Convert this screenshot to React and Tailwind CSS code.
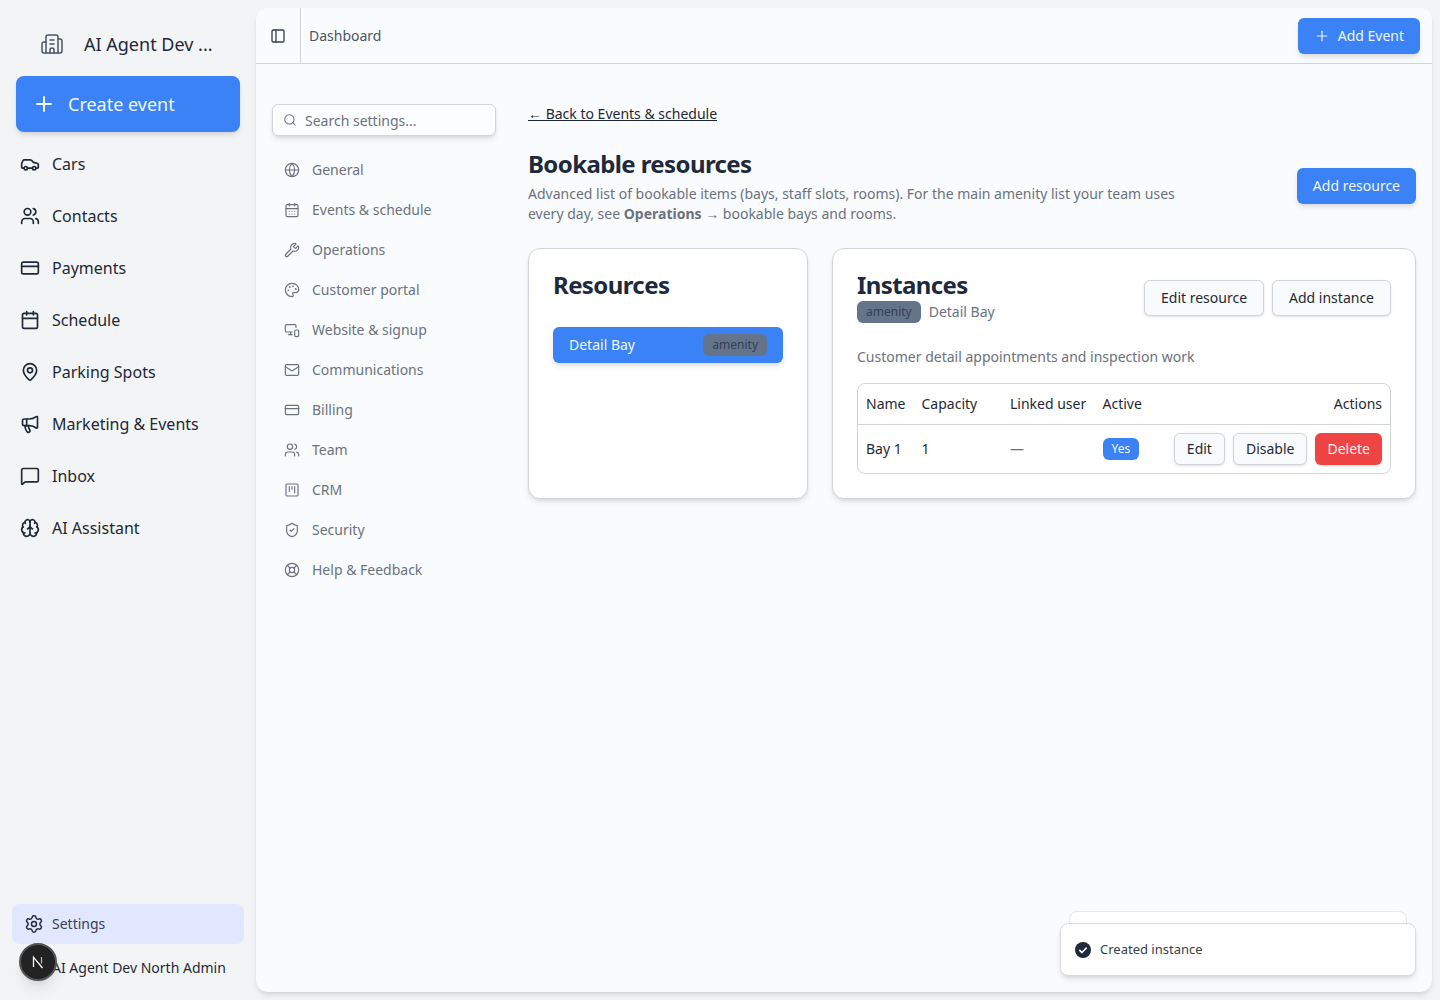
import React from "react";
import {
  Building2, Plus, Car, Users, CreditCard, Calendar, MapPin, Megaphone, MessageSquare, Brain,
  Settings, PanelLeft, Search, Globe, CalendarDays, Wrench, Palette, MonitorSmartphone, Mail,
  SquareKanban, ShieldCheck, LifeBuoy,
} from "lucide-react";

const mainNav = [
  [Car, "Cars"],
  [Users, "Contacts"],
  [CreditCard, "Payments"],
  [Calendar, "Schedule"],
  [MapPin, "Parking Spots"],
  [Megaphone, "Marketing & Events"],
  [MessageSquare, "Inbox"],
  [Brain, "AI Assistant"],
];

const settingsNav = [
  [Globe, "General"],
  [CalendarDays, "Events & schedule"],
  [Wrench, "Operations"],
  [Palette, "Customer portal"],
  [MonitorSmartphone, "Website & signup"],
  [Mail, "Communications"],
  [CreditCard, "Billing"],
  [Users, "Team"],
  [SquareKanban, "CRM"],
  [ShieldCheck, "Security"],
  [LifeBuoy, "Help & Feedback"],
];

function Sidebar() {
  return (
    <aside className="flex h-[1000px] w-[256px] shrink-0 flex-col">
      <div className="flex h-[76px] items-center pl-[40px] pt-[12px]">
        <Building2 className="h-[24px] w-[24px] text-[#4b5563]" strokeWidth={1.5} />
        <span className="ml-[20px] text-[18px] leading-[28px] text-[#1f2937]">AI Agent Dev ...</span>
      </div>
      <div className="px-[16px]">
        <button className="flex h-[56px] w-full items-center rounded-lg bg-[#3b82f6] pl-[16px] text-[18px] leading-[28px] text-[#eff6ff] shadow-md">
          <Plus className="h-[24px] w-[24px]" />
          <span className="ml-[12px]">Create event</span>
        </button>
      </div>
      <nav className="mt-[6px] flex flex-col">
        {mainNav.map(([Icon, label]) => (
          <div key={label} className="flex h-[52px] items-center pl-[20px] text-[16px] leading-[24px] text-[#1f2937]">
            <Icon className="h-[20px] w-[20px] text-[#1f2937]" strokeWidth={2} />
            <span className="ml-[12px]">{label}</span>
          </div>
        ))}
      </nav>
      <div className="mt-auto px-[12px] pb-[8px]">
        <div className="flex h-[40px] items-center rounded-lg bg-[#e0e7ff] pl-[12px] text-[14px] leading-[20px] text-[#374151]">
          <Settings className="h-[20px] w-[20px] text-[#1f2937]" strokeWidth={1.75} />
          <span className="ml-[8px]">Settings</span>
        </div>
        <div className="flex h-[48px] items-center pl-[40px] text-[14px] leading-[20px] text-[#1f2937]">AI Agent Dev North Admin</div>
      </div>
    </aside>
  );
}

function OutlineButton({ children, small }) {
  return (
    <button className={`rounded-md border border-[#d1d5db] bg-[#f9fafb] text-[14px] leading-[20px] text-[#1f2937] shadow-sm ${small ? "h-[32px] px-[12px]" : "h-[36px] px-[16px]"}`}>
      {children}
    </button>
  );
}

function Badge({ children }) {
  return (
    <span className="inline-flex h-[22px] items-center rounded-md bg-[#64748b] px-[9px] text-[12px] leading-[16px] text-[#334155]">{children}</span>
  );
}

function Content() {
  return (
    <div className="min-w-0 flex-1">
      <a className="block text-[14px] leading-[20px] text-[#1f2937] underline">← Back to Events &amp; schedule</a>
      <div className="mt-[24px] flex items-center justify-between">
        <div>
          <h1 className="text-[24px] font-bold leading-[32px] tracking-tight text-[#1e293b]">Bookable resources</h1>
          <p className="mt-[4px] w-[660px] text-[14px] leading-[20px] text-[#6b7280]">
            Advanced list of bookable items (bays, staff slots, rooms). For the main amenity list your team uses every day, see <strong className="font-bold">Operations</strong> → bookable bays and rooms.
          </p>
        </div>
        <button className="h-[36px] rounded-md bg-[#3b82f6] px-[16px] text-[14px] leading-[20px] text-[#eff6ff] shadow-md">Add resource</button>
      </div>
      <div className="mt-[24px] flex gap-[24px]">
        <section className="h-[251px] w-[280px] rounded-xl border border-[#d1d5db] bg-white px-[24px] pb-[24px] pt-[22px] shadow-md">
          <h2 className="text-[24px] font-bold leading-[28px] tracking-tight text-[#1e293b]">Resources</h2>
          <div className="mt-[28px] flex h-[36px] items-center justify-between rounded-md bg-[#3b82f6] pl-[16px] pr-[16px] text-[14px] leading-[20px] text-[#eff6ff] shadow-md">
            <span>Detail Bay</span>
            <Badge>amenity</Badge>
          </div>
        </section>
        <section className="h-[251px] flex-1 rounded-xl border border-[#d1d5db] bg-white px-[24px] pb-[24px] pt-[22px] shadow-md">
          <div className="flex items-start justify-between">
            <div>
              <h2 className="text-[24px] font-bold leading-[28px] tracking-tight text-[#1e293b]">Instances</h2>
              <div className="mt-[2px] flex items-center gap-[8px] text-[14px] leading-[20px] text-[#6b7280]">
                <Badge>amenity</Badge>
                <span>Detail Bay</span>
              </div>
            </div>
            <div className="mt-[9px] flex gap-[8px]">
              <OutlineButton>Edit resource</OutlineButton>
              <OutlineButton>Add instance</OutlineButton>
            </div>
          </div>
          <p className="mt-[24px] text-[14px] leading-[20px] text-[#6b7280]">Customer detail appointments and inspection work</p>
          <div className="mt-[16px] overflow-hidden rounded-lg border border-[#d1d5db]">
            <table className="w-full table-fixed text-[14px] leading-[20px] text-[#1f2937]">
              <colgroup>
                <col className="w-[55.5px]" />
                <col className="w-[88.5px]" />
                <col className="w-[92.5px]" />
                <col className="w-[72px]" />
                <col />
              </colgroup>
              <thead>
                <tr className="h-[40px] border-b border-[#d1d5db]">
                  <th className="px-[8px] text-left font-normal">Name</th>
                  <th className="px-[8px] text-left font-normal">Capacity</th>
                  <th className="px-[8px] text-left font-normal">Linked user</th>
                  <th className="px-[8px] text-left font-normal">Active</th>
                  <th className="px-[8px] text-right font-normal">Actions</th>
                </tr>
              </thead>
              <tbody>
                <tr className="h-[49px]">
                  <td className="px-[8px]">Bay 1</td>
                  <td className="px-[8px]">1</td>
                  <td className="px-[8px] text-[#6b7280]">—</td>
                  <td className="px-[8px]">
                    <span className="inline-flex h-[22px] items-center rounded-md bg-[#3b82f6] px-[9px] text-[12px] leading-[16px] text-[#eff6ff]">Yes</span>
                  </td>
                  <td className="px-[8px]">
                    <div className="flex justify-end gap-[8px]">
                      <OutlineButton small>Edit</OutlineButton>
                      <OutlineButton small>Disable</OutlineButton>
                      <button className="h-[32px] rounded-md bg-[#ef4444] px-[12px] text-[14px] leading-[20px] text-[#fef2f2] shadow-sm">Delete</button>
                    </div>
                  </td>
                </tr>
              </tbody>
            </table>
          </div>
        </section>
      </div>
    </div>
  );
}

function SettingsNav() {
  return (
    <div className="w-[224px] shrink-0">
      <div className="flex h-[32px] items-center rounded-md border border-[#d1d5db] bg-[#fcfdff] pl-[10px] text-[14px] leading-none text-[#6b7280] shadow-md">
        <Search className="h-[14px] w-[14px]" strokeWidth={1.75} />
        <span className="ml-[8px] leading-[19px]">Search settings...</span>
      </div>
      <nav className="mt-[14px] flex flex-col">
        {settingsNav.map(([Icon, label]) => (
          <div key={label} className="flex h-[40px] items-center pl-[12px] text-[14px] leading-[20px] text-[#6b7280]">
            <Icon className="h-[16px] w-[16px]" strokeWidth={1.75} />
            <span className="ml-[12px]">{label}</span>
          </div>
        ))}
      </nav>
    </div>
  );
}

function Toasts() {
  return (
    <>
      <div className="absolute bottom-[41px] left-[813px] h-[40px] w-[338px] rounded-lg border border-[#e5e7eb] bg-white" />
      <div className="absolute bottom-[16px] left-[804px] flex h-[53px] w-[356px] items-center rounded-lg border border-[#d9dbe0] bg-white pl-[14px] text-[13px] leading-normal text-[#374151] shadow-md">
        <svg viewBox="0 0 20 20" className="h-[16px] w-[16px]">
          <circle cx="10" cy="10" r="10" fill="#1e293b" />
          <path d="M6 10.5l2.7 2.7L14 7.6" fill="none" stroke="#fff" strokeWidth="2" strokeLinecap="round" strokeLinejoin="round" />
        </svg>
        <span className="ml-[9px]">Created instance</span>
      </div>
    </>
  );
}

export default function App() {
  return (
    <div className="relative h-[1000px] w-[1440px] overflow-hidden bg-[#f3f4f6] font-['Noto_Sans',sans-serif]">
      <div className="flex h-full">
        <Sidebar />
        <main className="relative my-[8px] mr-[8px] flex-1 rounded-xl bg-[#fafbfd] shadow-md">
          <header className="flex h-[56px] items-stretch border-b border-[#d1d5db]">
            <div className="flex w-[45px] items-center justify-center border-r border-[#d1d5db] pr-[1px]">
              <PanelLeft className="h-[16px] w-[16px] text-[#374151]" />
            </div>
            <div className="flex flex-1 items-center justify-between pl-[8px] pr-[12px]">
              <span className="text-[14px] leading-[20px] text-[#4b5563]">Dashboard</span>
              <button className="flex h-[36px] items-center rounded-md bg-[#3b82f6] pl-[16px] pr-[16px] text-[14px] leading-[20px] text-[#eff6ff] shadow-md">
                <Plus className="h-[16px] w-[16px]" strokeWidth={1.75} />
                <span className="ml-[8px]">Add Event</span>
              </button>
            </div>
          </header>
          <div className="flex gap-[32px] pl-[16px] pr-[16px] pt-[40px]">
            <SettingsNav />
            <Content />
          </div>
          <Toasts />
        </main>
      </div>
      <div className="absolute left-[19px] top-[943px] flex h-[38px] w-[38px] items-center justify-center rounded-full border-2 border-[#555] bg-[#222] shadow-lg">
        <svg viewBox="0 0 16 16" className="h-[16px] w-[16px]" aria-label="Next.js logo">
          <path d="M3.5 13V3.2L12.5 14" fill="none" stroke="#fff" strokeWidth="1.3" />
          <path d="M11.5 3v6.5" fill="none" stroke="#bbb" strokeWidth="1.2" />
        </svg>
      </div>
    </div>
  );
}
